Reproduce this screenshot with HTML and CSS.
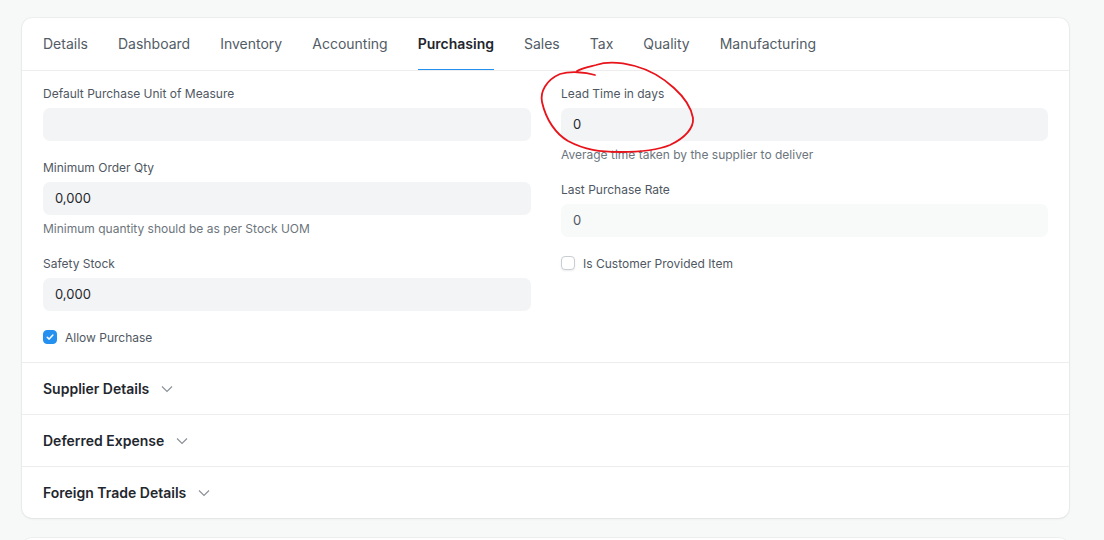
FILE: index.html
```html
<!DOCTYPE html>
<html>
<head>
<meta charset="utf-8">
<link rel="stylesheet" href="styles.css">
</head>
<body>
<div class="page">
  <div class="card">
    <nav class="tabs">
      <span class="tab">Details</span>
      <span class="tab">Dashboard</span>
      <span class="tab">Inventory</span>
      <span class="tab">Accounting</span>
      <span class="tab active">Purchasing</span>
      <span class="tab">Sales</span>
      <span class="tab">Tax</span>
      <span class="tab">Quality</span>
      <span class="tab">Manufacturing</span>
    </nav>
    <section class="section fields">
      <div class="col">
        <div class="field">
          <div class="label">Default Purchase Unit of Measure</div>
          <div class="input"></div>
        </div>
        <div class="field">
          <div class="label">Minimum Order Qty</div>
          <div class="input">0,000</div>
          <div class="help">Minimum quantity should be as per Stock UOM</div>
        </div>
        <div class="field">
          <div class="label">Safety Stock</div>
          <div class="input">0,000</div>
        </div>
        <div class="check-row">
          <span class="checkbox checked"><svg width="10" height="10" viewBox="0 0 10 10"><path d="M2.2 5.2 L4.2 7.1 L7.9 3" fill="none" stroke="#fff" stroke-width="1.5" stroke-linecap="round" stroke-linejoin="round"/></svg></span>
          <span class="check-label">Allow Purchase</span>
        </div>
      </div>
      <div class="col">
        <div class="field">
          <div class="label">Lead Time in days</div>
          <div class="input">0</div>
          <div class="help">Average time taken by the supplier to deliver</div>
        </div>
        <div class="field">
          <div class="label">Last Purchase Rate</div>
          <div class="input readonly">0</div>
        </div>
        <div class="check-row">
          <span class="checkbox"></span>
          <span class="check-label">Is Customer Provided Item</span>
        </div>
      </div>
    </section>
    <section class="section collapsed">
      <span class="sec-title">Supplier Details</span>
      <svg class="chev" width="12" height="8" viewBox="0 0 12 8"><path d="M1 1.5 L6 6.5 L11 1.5" fill="none" stroke="#8a8f94" stroke-width="1.1"/></svg>
    </section>
    <section class="section collapsed">
      <span class="sec-title">Deferred Expense</span>
      <svg class="chev" width="12" height="8" viewBox="0 0 12 8"><path d="M1 1.5 L6 6.5 L11 1.5" fill="none" stroke="#8a8f94" stroke-width="1.1"/></svg>
    </section>
    <section class="section collapsed last">
      <span class="sec-title">Foreign Trade Details</span>
      <svg class="chev" width="12" height="8" viewBox="0 0 12 8"><path d="M1 1.5 L6 6.5 L11 1.5" fill="none" stroke="#8a8f94" stroke-width="1.1"/></svg>
    </section>
  </div>
  <div class="card next-card"></div>
</div>
<svg class="scribble" width="1104" height="540" viewBox="0 0 1104 540">
  <path d="M595 75 C585 72 570 71 560 74 C546 80 540 92 542 102 C546 120 556 134 568 141 C585 150 600 152 620 152 C640 152 658 150 670 145 C685 138 694 128 693 118 C691 106 684 97 674 88 C662 77 650 70 635 66 C620 62 605 62 596 65 C588 67 582 68 577 71" fill="none" stroke="#e8141b" stroke-width="1.8" stroke-linecap="round" stroke-linejoin="round"/>
</svg>
</body>
</html>
```
FILE: styles.css
```css
* { box-sizing: border-box; }
html, body { margin: 0; padding: 0; }
body {
  background: #f7f8f8;
  font-family: Inter, "Noto Sans", sans-serif;
  color: #1f272e;
  width: 1104px;
  height: 540px;
  overflow: hidden;
  position: relative;
}
.page {
  padding: 18px 0 0 22px;
}
.card {
  width: 1047px;
  background: #fff;
  border-radius: 10px;
  box-shadow: 0 0 0 1px rgba(0,0,0,0.035), 0 1px 3px rgba(0,0,0,0.06);
}
.next-card {
  margin-top: 20px;
  height: 40px;
}
.tabs {
  display: flex;
  gap: 30px;
  padding: 0 21px;
  height: 53px;
  border-bottom: 1px solid #ededed;
}
.tab {
  font-size: 14px;
  color: #525c66;
  line-height: 52px;
  height: 52px;
  position: relative;
}
.tab.active {
  color: #1f272e;
  font-weight: 600;
}
.tab.active::after {
  content: "";
  position: absolute;
  left: 0;
  right: 0;
  bottom: 0;
  height: 1px;
  background: #2490ef;
}
.section {
  border-bottom: 1px solid #ededed;
  padding: 0 21px;
}
.section.last { border-bottom: none; }
.fields {
  display: grid;
  grid-template-columns: 488px 487px;
  column-gap: 30px;
  padding-top: 14px;
  padding-bottom: 17px;
}
.field {
  margin-bottom: 18px;
}
.label {
  font-size: 12px;
  line-height: 18px;
  color: #4f5862;
  margin-bottom: 5px;
}
.input {
  height: 33px;
  background: #f3f4f5;
  border-radius: 7px;
  font-size: 13px;
  line-height: 33px;
  padding: 0 12px;
  color: #1f272e;
}
.input.readonly {
  background: #f8f9f9;
  color: #4f5862;
}
.help {
  font-size: 12px;
  line-height: 16px;
  margin-top: 6px;
  color: #6c757d;
}
.check-row {
  display: flex;
  align-items: center;
  gap: 8px;
  height: 16px;
}
.checkbox {
  width: 14px;
  height: 14px;
  border-radius: 4px;
  border: 1px solid #c9ced3;
  background: #fff;
  box-shadow: 0 1px 2px rgba(0,0,0,0.08);
  display: flex;
  align-items: center;
  justify-content: center;
}
.checkbox.checked {
  background: #2490ef;
  border-color: #2490ef;
  box-shadow: none;
}
.check-label {
  font-size: 12px;
  color: #4f5862;
}
.collapsed {
  height: 52px;
  display: flex;
  align-items: center;
  gap: 12px;
}
.collapsed.last { height: 51px; }
.sec-title {
  font-size: 14px;
  font-weight: 600;
  color: #1f272e;
}
.chev { margin-top: 1px; }
.scribble {
  position: absolute;
  left: 0;
  top: 0;
  pointer-events: none;
}
```
